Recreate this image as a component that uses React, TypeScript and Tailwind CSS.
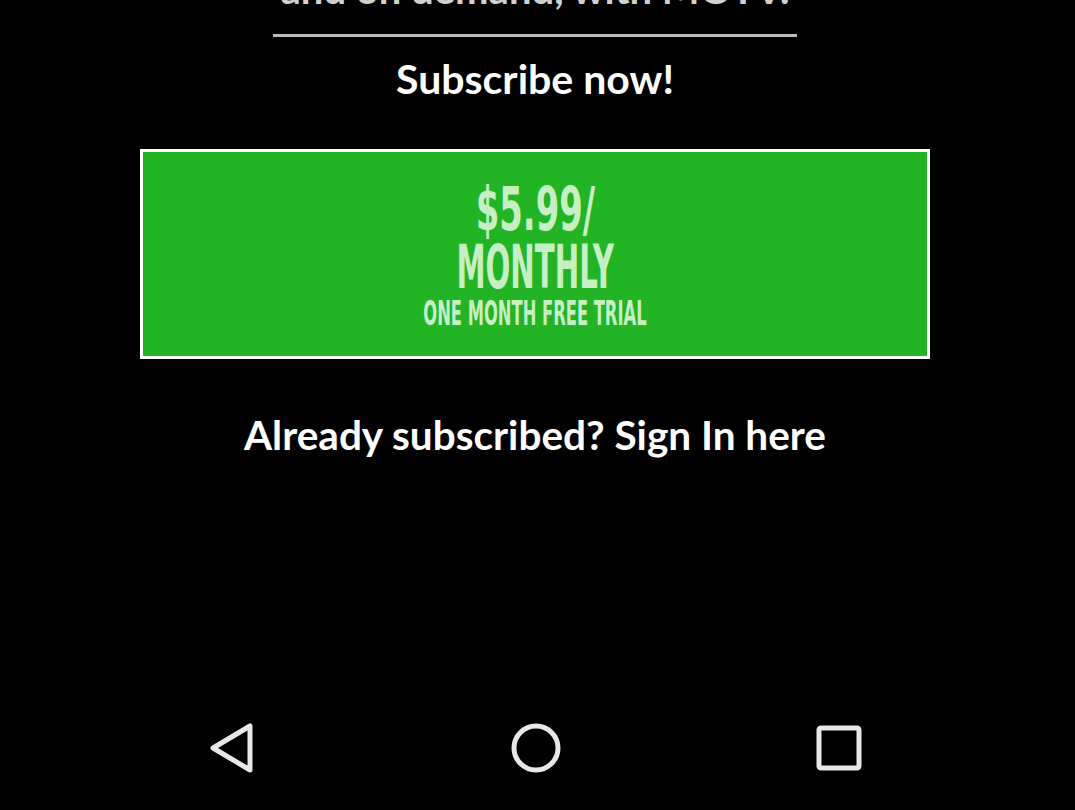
import React from 'react';

const NavBar: React.FC = () => (
  <div className="mt-auto h-[124px] flex items-center justify-between pl-[208px] pr-[212px]">
    <svg width="48" height="52" viewBox="0 0 48 52" className="text-[#e8e8e8]">
      <path d="M42 4 L42 48 L5 26 Z" fill="none" stroke="currentColor" strokeWidth="5" strokeLinejoin="round" />
    </svg>
    <svg width="52" height="52" viewBox="0 0 52 52" className="text-[#e8e8e8]">
      <circle cx="26" cy="26" r="22" fill="none" stroke="currentColor" strokeWidth="5" />
    </svg>
    <svg width="48" height="48" viewBox="0 0 48 48" className="text-[#e8e8e8]">
      <rect x="4" y="4" width="40" height="40" rx="2" fill="none" stroke="currentColor" strokeWidth="5" />
    </svg>
  </div>
);

export default function App() {
  return (
    <div className="h-[810px] w-[1075px] bg-black overflow-hidden flex flex-col font-['Lato',sans-serif]">
      <div className="flex flex-col items-center pr-[5px]">
        <p className="mt-[-33px] text-[40px] leading-[44px] font-bold text-[#d0d0d0]">
          and on demand, with MOTV.
        </p>
        <div className="mt-[23px] h-[3px] w-[524px] bg-[#bdbdbd]" />
        <h2 className="mt-[18px] text-[41px] leading-[48px] font-bold text-white">Subscribe now!</h2>
      </div>

      <div className="mt-[46px] ml-[140px] mr-[145px] h-[210px] border-[3px] border-white bg-[#23b425] flex flex-col items-center justify-center font-['DejaVu_Sans_Condensed',sans-serif] font-bold text-[#c6efc4]">
        <div className="flex flex-col items-center mt-[4px]">
          <span className="scale-x-[0.66] scale-y-[1.06] text-[57px] leading-[58px]">$5.99/</span>
          <span className="scale-x-[0.57] scale-y-[1.06] text-[57px] leading-[58px]">MONTHLY</span>
          <span className="scale-x-[0.55] text-[33px] leading-[36px]">ONE MONTH FREE TRIAL</span>
        </div>
      </div>

      <p className="mt-[52px] pr-[5px] text-center text-[40.5px] leading-[48px] font-bold text-white">
        Already subscribed? Sign In here
      </p>

      <NavBar />
    </div>
  );
}
